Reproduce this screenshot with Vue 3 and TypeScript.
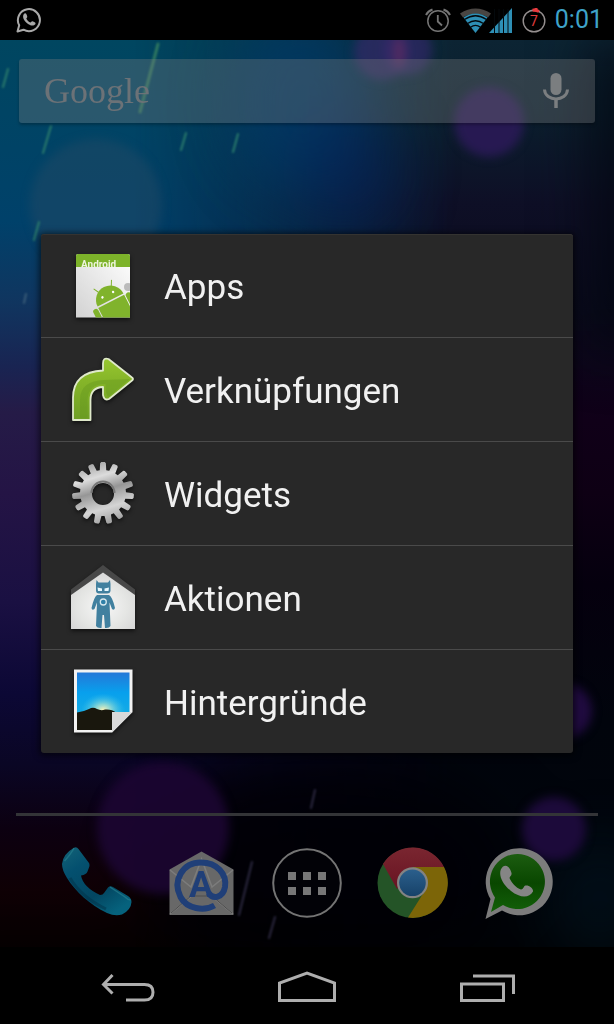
<script setup lang="ts">
type ItemId = 'apps' | 'shortcuts' | 'widgets' | 'actions' | 'wallpapers'

interface MenuItem {
  id: ItemId
  label: string
}

const items: MenuItem[] = [
  { id: 'apps', label: 'Apps' },
  { id: 'shortcuts', label: 'Verknüpfungen' },
  { id: 'widgets', label: 'Widgets' },
  { id: 'actions', label: 'Aktionen' },
  { id: 'wallpapers', label: 'Hintergründe' },
]

// Outline of a toothed wheel centred on cx, cy.
function gearPath(cx: number, cy: number, teeth: number, outer: number, inner: number): string {
  const step = (Math.PI * 2) / teeth
  const points: string[] = []
  for (let i = 0; i < teeth; i++) {
    const a = i * step - Math.PI / 2
    const corners: [number, number][] = [
      [inner, a - step * 0.34],
      [outer - 1, a - step * 0.23],
      [outer, a - step * 0.14],
      [outer, a + step * 0.14],
      [outer - 1, a + step * 0.23],
      [inner, a + step * 0.34],
    ]
    for (const [r, t] of corners) {
      points.push(`${(cx + r * Math.cos(t)).toFixed(2)} ${(cy + r * Math.sin(t)).toFixed(2)}`)
    }
  }
  return `M${points.join('L')}Z`
}

const gear = gearPath(34, 33, 15, 31, 23) + 'M45 34A11 11 0 1 0 23 34A11 11 0 1 0 45 34Z'
</script>

<template>
  <div class="phone">
    <header class="status">
      <svg class="status-chat" viewBox="0 0 26 26" aria-label="WhatsApp">
        <path d="M1.500 24.500L3.200 18.300A11 11 0 1 1 7.500 22.700Z" fill="none" stroke="#a9a9a9" stroke-width="2" stroke-linejoin="round" />
        <path d="M8.500 6.500C6 8.500 7 12.500 10.500 15.800C14 19 17.500 19.500 19.300 17.200C20 16 19.500 15.500 16.500 14.300C15.500 14 15.300 15.200 14.500 15.500C12.800 15 11 13 10.300 11.500C11.800 10 11.400 9.500 10.300 7C9.900 6.200 9.200 6.100 8.500 6.500Z" fill="#a9a9a9" />
      </svg>
      <div class="status-right">
        <svg class="status-alarm" viewBox="0 0 26 26" aria-label="Alarm">
          <g fill="none" stroke="#757575" stroke-width="1.500">
            <circle cx="13" cy="14" r="10.200" />
            <path d="M12.800 8V14.500L17 18.500" stroke-width="1.800" />
            <path d="M1 8Q3 4 7.500 2.500M25 8Q23 4 18.500 2.500" stroke-width="2" />
          </g>
        </svg>
        <svg class="status-net" viewBox="0 0 53 26" aria-label="WLAN und Mobilfunk">
          <path d="M0 6.500Q15.500 -3.500 31 6.500L28 10.500Q15.500 3 3 10.500Z" fill="#494542" />
          <path d="M3.500 10.500Q15.500 2.500 27.500 10.500L15.500 26Z" fill="#2e8fb5" />
          <path d="M4.500 12.500Q15.500 5 26.500 12.500M7.500 16.500Q15.500 11 23.500 16.500M10.500 20.200Q15.500 16.500 20.500 20.200" fill="none" stroke="#03090d" stroke-width="1.300" />
          <path d="M29 26L52 1V26Z" fill="#2e8fb5" />
          <path d="M34.500 2V26M39 2V26M43.500 2V26M48 2V26" stroke="#04090c" stroke-width="1" />
        </svg>
        <svg class="status-battery" viewBox="0 0 24 26" aria-label="Akku 7 Prozent">
          <circle cx="12" cy="14" r="10.800" fill="none" stroke="#958f8f" stroke-width="1.400" />
          <path d="M10.500 3.200A10.800 10.800 0 0 1 17 4.500" fill="none" stroke="#e83a3e" stroke-width="3" />
          <path d="M12.500 1h3v2h-3z" fill="#e83a3e" />
          <text x="12" y="19" text-anchor="middle" class="battery-text">7</text>
        </svg>
        <time class="clock">0:01</time>
      </div>
    </header>

    <main class="home">
      <svg class="wallpaper" viewBox="0 40 614 907" preserveAspectRatio="none" aria-hidden="true">
        <defs>
          <linearGradient id="wl" x1="0" y1="0" x2="0" y2="1">
            <stop offset="0" stop-color="#004660" />
            <stop offset=".2" stop-color="#00416a" />
            <stop offset=".29" stop-color="#10355f" />
            <stop offset=".36" stop-color="#192452" />
            <stop offset=".41" stop-color="#251b47" />
            <stop offset=".5" stop-color="#241445" />
            <stop offset=".62" stop-color="#1a1042" />
            <stop offset=".72" stop-color="#0c0835" />
            <stop offset=".8" stop-color="#0a0624" />
            <stop offset=".87" stop-color="#0c0010" />
            <stop offset=".94" stop-color="#100005" />
            <stop offset="1" stop-color="#0a0002" />
          </linearGradient>
          <linearGradient id="wr" x1="0" y1="0" x2="0" y2="1">
            <stop offset="0" stop-color="#0c2433" />
            <stop offset=".08" stop-color="#0b1f2e" />
            <stop offset=".18" stop-color="#0e0f26" />
            <stop offset=".3" stop-color="#0a0a1c" />
            <stop offset=".42" stop-color="#100018" />
            <stop offset=".5" stop-color="#0e0014" />
            <stop offset=".6" stop-color="#05000e" />
            <stop offset=".75" stop-color="#01040c" />
            <stop offset="1" stop-color="#01060c" />
          </linearGradient>
          <linearGradient id="fade" x1="0" y1="0" x2="1" y2="0">
            <stop offset=".22" stop-color="#000" />
            <stop offset=".5" stop-color="#808080" />
            <stop offset=".74" stop-color="#fff" />
          </linearGradient>
          <mask id="mr"><rect y="40" width="614" height="907" fill="url(#fade)" /></mask>
          <filter id="b2" x="-50%" y="-50%" width="200%" height="200%" color-interpolation-filters="sRGB"><feGaussianBlur stdDeviation="5" /></filter>
          <filter id="b1" x="-50%" y="-50%" width="200%" height="200%" color-interpolation-filters="sRGB"><feGaussianBlur stdDeviation="28" /></filter>
          <filter id="b0" x="-100%" y="-20%" width="300%" height="140%" color-interpolation-filters="sRGB"><feGaussianBlur stdDeviation="1" /></filter>
        </defs>
        <rect y="40" width="614" height="907" fill="url(#wl)" />
        <rect y="40" width="614" height="907" fill="url(#wr)" mask="url(#mr)" />
        <g filter="url(#b1)">
          <ellipse cx="300" cy="100" rx="70" ry="90" fill="#00386c" opacity=".6" />
          <ellipse cx="350" cy="170" rx="50" ry="60" fill="#04205a" opacity=".5" />
          <ellipse cx="330" cy="870" rx="190" ry="110" fill="#000006" opacity=".85" />
          <rect x="590" y="40" width="60" height="310" fill="#03060f" opacity=".8" />
          <rect x="-60" y="925" width="740" height="60" fill="#000" opacity=".6" />
          <ellipse cx="600" cy="900" rx="50" ry="60" fill="#021420" opacity=".6" />
        </g>
        <g filter="url(#b2)">
          <circle cx="96" cy="205" r="66" fill="#2a4c64" opacity=".4" />
          <circle cx="163" cy="828" r="66" fill="#1c0632" opacity=".9" />
          <circle cx="382" cy="52" r="28" fill="#342a68" opacity=".7" />
          <circle cx="407" cy="50" r="25" fill="#34286c" opacity=".65" />
          <circle cx="489" cy="122" r="35" fill="#2a1a56" opacity=".9" />
          <circle cx="565" cy="711" r="27" fill="#200b40" />
          <circle cx="554" cy="829" r="32" fill="#1c0a3a" />
          <ellipse cx="399" cy="52" rx="6" ry="16" fill="#5a2c60" opacity=".8" />
        </g>
        <g filter="url(#b0)" fill="none" stroke-linecap="round">
          <path d="M158 44L140 112" stroke="#2f7860" stroke-width="3" />
          <path d="M8 69L3 87M51 126L43 153M186 133L181 150M238 134L233 152M39 222L34 240" stroke="#2b7c6c" stroke-width="2" />
          <path d="M26 294L24 303" stroke="#3a5c78" stroke-width="2" />
          <path d="M315 790L311 808M252 862L239 915M275 917L269 938" stroke="#2c2840" stroke-width="2" />
        </g>
      </svg>

      <div class="search">
        <button type="button" class="search-logo">Google</button>
        <button type="button" class="search-mic" aria-label="Sprachsuche">
          <svg viewBox="0 0 28 38">
            <rect x="8.500" y="1" width="11" height="22" rx="5.500" fill="#7b7e80" />
            <path d="M2.500 17.500C3 30 25 30 25.500 17.500" fill="none" stroke="#7b7e80" stroke-width="3" />
            <path d="M14 27V36" stroke="#7b7e80" stroke-width="3.500" />
          </svg>
        </button>
      </div>

      <nav class="dock" aria-label="Favoriten">
        <button type="button" class="dock-item" aria-label="Telefon">
          <svg viewBox="0 0 72 72">
            <defs>
              <linearGradient id="ph" x1="0" y1="0" x2=".7" y2="1">
                <stop offset="0" stop-color="#146377" />
                <stop offset=".3" stop-color="#04506f" />
                <stop offset=".7" stop-color="#034661" />
                <stop offset="1" stop-color="#06627d" />
              </linearGradient>
            </defs>
            <path d="M13 .8Q15.500 -.5 17.500 2L28 16Q29 18 28 20.500L26.500 24.500Q25.500 27.500 20 28.500Q22 40 39 48Q42 48 43 46L47 40.500Q49 38.500 52 40L67 49Q70.500 51.500 70.500 55Q70 63 61 67.500Q54 69.500 46 66C29 58 14 44 6 31Q1 23 1 17Q2 7 13 .8Z" fill="url(#ph)" />
            <path d="M13 1Q10 7 3.500 14M49 40L64 50Q67 53 69.500 53" fill="none" stroke="#257d8c" stroke-width="1.500" opacity=".7" />
            <path d="M9 31Q20 50 45 62" fill="none" stroke="#023247" stroke-width="3" opacity=".5" />
          </svg>
        </button>
        <button type="button" class="dock-item" aria-label="E-Mail">
          <svg viewBox="0 0 72 72">
            <path d="M35.500 4.500L67.500 22.500V68H3.500V22.500Z" fill="#686868" />
            <path d="M4 23L25 40L35.500 12L46 40L67 23M4 67L28 47M67 67L43 47" fill="none" stroke="#7c7c7c" stroke-width="1.500" />
            <path d="M5 66L25 49H46L66 66" fill="none" stroke="#4c4c4c" stroke-width="1" />
            <path d="M48.500 58.500C38 64.500 21 62 14.500 50C6 33 17 15.500 35 15.500C51 15.500 61 27 59 40C57 51 47 52.500 42.500 46" fill="none" stroke="#203f78" stroke-width="6" />
            <text x="35" y="50" text-anchor="middle" class="mail-letter">A</text>
          </svg>
        </button>
        <button type="button" class="dock-item" aria-label="Alle Apps">
          <svg viewBox="0 0 72 72">
            <circle cx="36" cy="36" r="33.800" fill="#020207" stroke="#747474" stroke-width="2" />
            <path d="M17 25h8v8h-8zM32 25h8v8h-8zM47 25h8v8h-8zM17 40h8v8h-8zM32 40h8v8h-8zM47 40h8v8h-8z" fill="#777" />
          </svg>
        </button>
        <button type="button" class="dock-item" aria-label="Chrome">
          <svg viewBox="0 0 72 72">
            <defs>
              <linearGradient id="cb" x1="0" y1="0" x2="0" y2="1">
                <stop offset="0" stop-color="#2b5f8c" />
                <stop offset="1" stop-color="#174269" />
              </linearGradient>
              <linearGradient id="cr" x1="0" y1="0" x2="0" y2="1">
                <stop offset="0" stop-color="#7a2630" />
                <stop offset="1" stop-color="#681422" />
              </linearGradient>
            </defs>
            <circle cx="36.500" cy="35.800" r="35" fill="#245427" />
            <path d="M36.500 20H68A35 35 0 0 1 32 70.600L50 42Z" fill="#7c6508" />
            <path d="M7 17A35 35 0 0 1 68 20H36.500L21 42Z" fill="url(#cr)" />
            <circle cx="36.500" cy="35.800" r="15.500" fill="#838383" />
            <circle cx="36.500" cy="35.800" r="13.300" fill="url(#cb)" />
          </svg>
        </button>
        <button type="button" class="dock-item" aria-label="WhatsApp">
          <svg viewBox="0 0 72 72">
            <defs>
              <linearGradient id="wa" x1="0" y1="0" x2="0" y2="1">
                <stop offset="0" stop-color="#1c5c10" />
                <stop offset=".5" stop-color="#094700" />
                <stop offset="1" stop-color="#126008" />
              </linearGradient>
            </defs>
            <path d="M4.500 72L9.500 52A33.500 33.500 0 1 1 21 63.500Z" fill="#7c7c7c" />
            <path d="M10 65L14 50.500A27.500 27.500 0 1 1 22 58Z" fill="url(#wa)" />
            <path d="M22 19.500C16 25 20 36 30 44C39 51 48 51.500 52 44.500C52.500 41 48 38 44.500 38.500C42.500 39 42.500 42.500 40 42.500C35 41 30 35 28.500 31C29 29 31 28.500 30.500 26C29.500 22 26.500 17 22 19.500Z" fill="#858585" />
          </svg>
        </button>
      </nav>

      <div class="overlay">
        <ul class="dialog" role="menu">
          <li v-for="item in items" :key="item.id" class="row" role="none">
            <button type="button" class="row-button" role="menuitem">
              <svg class="row-icon" viewBox="0 0 68 68" aria-hidden="true">
                <template v-if="item.id === 'apps'">
                  <defs>
                    <linearGradient id="pg" x1="1" y1="0" x2="0" y2="1">
                      <stop offset="0" stop-color="#fff" />
                      <stop offset="1" stop-color="#d2d2d2" />
                    </linearGradient>
                    <clipPath id="pc"><path d="M7 15H61V65.500H7Z" /></clipPath>
                    <clipPath id="hc"><path d="M7 2H61V15H7Z" /></clipPath>
                  </defs>
                  <path d="M7 4Q7 2 9 2H59Q61 2 61 4V65.500H7Z" fill="url(#pg)" />
                  <path d="M7 15V4Q7 2 9 2H59Q61 2 61 4V15Z" fill="#7db32a" />
                  <text x="12" y="16" class="app-word" clip-path="url(#hc)">Android</text>
                  <g clip-path="url(#pc)">
                    <circle cx="59" cy="35" r="4" fill="#bbb" />
                    <g transform="translate(41.500 48) rotate(-27)" fill="#80b32c">
                      <path d="M-14.500 0A14.500 14.500 0 0 1 14.500 0Z" />
                      <path d="M-14.500 1.500H14.500V40H-14.500Z" />
                      <rect x="-21" y="1" width="5.500" height="22" rx="2.700" />
                      <rect x="15.500" y="1" width="5.500" height="22" rx="2.700" />
                      <path d="M-7 -12L-10 -17.500M7 -12L10 -17.500" stroke="#80b32c" stroke-width="1" />
                      <circle cx="-6" cy="-6" r="1.200" fill="#fff" />
                      <circle cx="6" cy="-6" r="1.200" fill="#fff" />
                    </g>
                  </g>
                </template>
                <template v-else-if="item.id === 'shortcuts'">
                  <defs>
                    <linearGradient id="ar" x1="0" y1="0" x2="0" y2="1">
                      <stop offset="0" stop-color="#97c62f" />
                      <stop offset=".35" stop-color="#86b629" />
                      <stop offset="1" stop-color="#6f9f25" />
                    </linearGradient>
                  </defs>
                  <path d="M4 64V42Q4 16 34 14.500V7.500Q34 1 39.500 3L63 21.500Q65 23 63 24.500L40 43Q35 45 34 39V31Q21.500 31.500 21.500 44V64Z" fill="url(#ar)" stroke="#dfe9ca" stroke-width="1.800" stroke-linejoin="round" />
                  <path d="M11 62V43Q12 24.500 35 24L61 23L40 40.500Q36.500 41 36.500 28Q19 28 18.500 44V62Z" fill="#63951d" opacity=".4" />
                </template>
                <template v-else-if="item.id === 'widgets'">
                  <defs>
                    <linearGradient id="gg" x1=".2" y1="0" x2=".5" y2="1">
                      <stop offset="0" stop-color="#999" />
                      <stop offset=".28" stop-color="#dcdcdc" />
                      <stop offset=".5" stop-color="#969696" />
                      <stop offset=".78" stop-color="#d4d4d4" />
                      <stop offset="1" stop-color="#a5a5a5" />
                    </linearGradient>
                  </defs>
                  <path :d="gear" fill="url(#gg)" fill-rule="evenodd" />
                  <path d="M22.500 33A11.500 11.500 0 0 1 45.500 33" fill="none" stroke="#777" stroke-width="2" />
                </template>
                <template v-else-if="item.id === 'actions'">
                  <defs>
                    <radialGradient id="hs" cx=".5" cy=".6" r=".6">
                      <stop offset="0" stop-color="#f7f7f7" />
                      <stop offset=".65" stop-color="#e4e5e3" />
                      <stop offset="1" stop-color="#d8d8d8" />
                    </radialGradient>
                  </defs>
                  <path d="M34 1L66 25.500V34H2V25.500Z" fill="#484848" />
                  <path d="M34 8.500L66 31V65H2V31Z" fill="url(#hs)" />
                  <g fill="#41809f">
                    <path d="M27.500 16L29.500 18.500H39L41 16L41.500 20V27Q41 29.500 38 29.500H30Q27 29.500 27 26.500V20Z" />
                    <path d="M28 31H40Q43.500 33 46 44Q45 47 43 45L40.500 38.500L41.500 62Q40 64.500 36 64L35 51H33.500L32.500 64Q28.500 64.500 27 62L28 38.500L25.500 45Q23 47 22.500 44Q25 33 28 31Z" />
                  </g>
                  <path d="M28.500 23.500L33 24.500V27H29ZM40 23.500L35.500 24.500V27H39.500Z" fill="#e8f8ff" />
                  <circle cx="34.300" cy="38" r="3" fill="#3080a8" stroke="#d7e8ee" stroke-width="1.300" />
                </template>
                <template v-else>
                  <defs>
                    <linearGradient id="sky" x1="0" y1="0" x2="0" y2="1">
                      <stop offset="0" stop-color="#2478d8" />
                      <stop offset=".35" stop-color="#08a0ed" />
                      <stop offset="1" stop-color="#1eb5e0" />
                    </linearGradient>
                    <radialGradient id="sun" cx=".5" cy=".95" r=".42">
                      <stop offset="0" stop-color="#fff3b8" />
                      <stop offset=".35" stop-color="#a5e0d0" stop-opacity=".8" />
                      <stop offset="1" stop-color="#38c4ee" stop-opacity="0" />
                    </radialGradient>
                  </defs>
                  <path d="M5 1.500H63.500V44L43 64.500H5Z" fill="#f2f2f2" />
                  <path d="M8 4.500H60.500V44H43V62H8Z" fill="url(#sky)" />
                  <path d="M8 4.500H60.500V44H8Z" fill="url(#sun)" />
                  <path d="M8 44.500Q14 44 20 41Q24 38.500 28 41Q32 43 36 41.500Q43 41 47 44.500H43V62H8Z" fill="#19170d" />
                  <path d="M43 44H63.500L43 64.500Z" fill="#dadada" />
                </template>
              </svg>
              <span class="row-label">{{ item.label }}</span>
            </button>
          </li>
        </ul>
      </div>
    </main>

    <nav class="keys" aria-label="Systemtasten">
      <button type="button" class="key" aria-label="Zurück">
        <svg viewBox="0 0 60 32">
          <path d="M14.500 5L5.500 14.500L14.500 23.500M6 14.500H46.500Q55 14.500 55 22.200Q55 30 46.500 30H28" />
        </svg>
      </button>
      <button type="button" class="key" aria-label="Startseite">
        <svg viewBox="0 0 60 32">
          <path d="M2.500 30.500V13L30 3L57.500 13V30.500Z" />
        </svg>
      </button>
      <button type="button" class="key" aria-label="Letzte Apps">
        <svg viewBox="0 0 60 32">
          <path d="M5.500 14H47.500V30.500H5.500ZM17 6H57.500V24" />
        </svg>
      </button>
    </nav>
  </div>
</template>

<style>
body {
  margin: 0;
  background: #000;
}
</style>

<style scoped>
.phone {
  display: flex;
  flex-direction: column;
  min-height: 100vh;
  background: #000;
  font-family: Roboto, 'Noto Sans', sans-serif;
}

button {
  padding: 0;
  border: 0;
  background: none;
  color: inherit;
  font: inherit;
}

svg {
  display: block;
}

.status {
  display: flex;
  align-items: center;
  justify-content: space-between;
  height: 40px;
  padding: 0 11px 0 16px;
}

.status-right {
  display: flex;
  align-items: center;
  gap: 9px;
}

.status-chat,
.status-alarm {
  width: 26px;
  height: 26px;
}

.status-net {
  width: 53px;
  height: 26px;
}

.status-battery {
  width: 24px;
  height: 26px;
}

.battery-text {
  font: 14px Roboto, sans-serif;
  fill: #e03b3d;
}

.clock {
  color: #3ea3c9;
  font-size: 25px;
  line-height: 40px;
}

.home {
  position: relative;
  display: flex;
  flex: 1;
  flex-direction: column;
  justify-content: space-between;
}

.wallpaper {
  position: absolute;
  inset: 0;
  width: 100%;
  height: 100%;
}

.search {
  position: relative;
  display: flex;
  align-items: center;
  justify-content: space-between;
  height: 64px;
  margin: 19px 19px 0;
  padding: 0 25px;
  border-radius: 3px;
  background: rgba(130, 130, 130, 0.32);
  box-shadow: 0 2px 3px rgba(0, 0, 0, 0.25);
}

.search-logo {
  color: #6c7277;
  font-family: 'Liberation Serif', serif;
  font-size: 36px;
  line-height: 64px;
}

.search-mic svg {
  width: 28px;
  height: 38px;
}

.dock {
  position: relative;
  display: grid;
  grid-template-columns: repeat(5, 1fr);
  justify-items: center;
  margin: 0 16px;
  padding: 31px 28px 28px;
  border-top: 3px solid #333437;
}

.dock-item svg {
  width: 72px;
  height: 72px;
}

.mail-letter {
  font: bold 36px Roboto, sans-serif;
  fill: #203f78;
}

.overlay {
  position: absolute;
  inset: 0;
  display: flex;
  align-items: center;
  padding: 0 41px;
}

.dialog {
  flex: 1;
  margin: 0;
  padding: 0;
  border-radius: 3px;
  background: #282828;
  box-shadow: 0 1px 6px 2px rgba(0, 0, 0, 0.6), inset 0 1px 0 #343331;
  list-style: none;
}

.row + .row {
  border-top: 1px solid #4a4a4a;
}

.row-button {
  display: flex;
  align-items: center;
  gap: 27px;
  width: 100%;
  height: 103px;
  padding: 0 28px;
  text-align: left;
}

.row-icon {
  width: 68px;
  height: 68px;
  filter: drop-shadow(0 2px 2px rgba(0, 0, 0, 0.6));
}

.row-label {
  padding-top: 4px;
  color: #f1f1f1;
  font-size: 35px;
  line-height: 48px;
}

.app-word {
  font: bold 10px Roboto, sans-serif;
  fill: #eef5dd;
}

.keys {
  display: grid;
  grid-template-columns: repeat(3, 1fr);
  place-items: center;
  height: 77px;
  padding: 0 38px;
}

.key svg {
  width: 60px;
  height: 32px;
  fill: none;
  stroke: #aeaeae;
  stroke-width: 3px;
}
</style>
